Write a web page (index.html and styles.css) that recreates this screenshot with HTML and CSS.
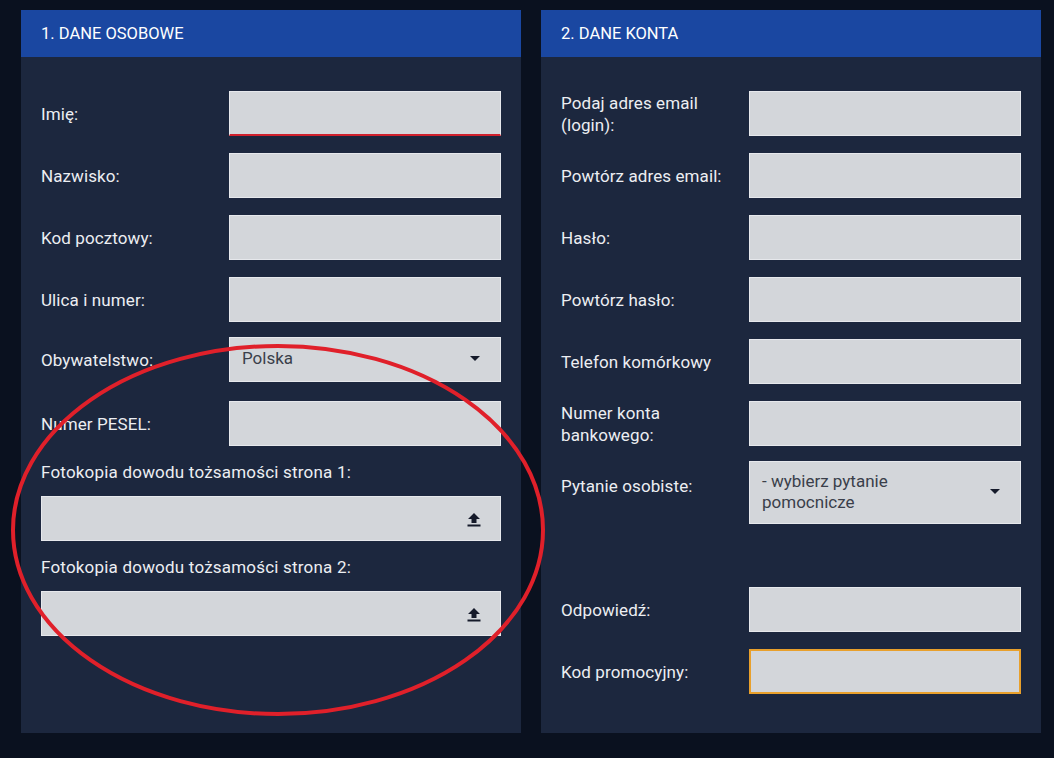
FILE: index.html
```html
<!DOCTYPE html>
<html lang="pl">
<head>
<meta charset="utf-8">
<title>Rejestracja</title>
<link rel="stylesheet" href="styles.css">
</head>
<body>
<div class="page">
  <section class="panel">
    <header class="panel-head">1. DANE OSOBOWE</header>
    <div class="panel-body">
      <div class="rows">
        <div class="row"><label class="lbl">Imię:</label><div class="field field-error"></div></div>
        <div class="row"><label class="lbl">Nazwisko:</label><div class="field"></div></div>
        <div class="row"><label class="lbl">Kod pocztowy:</label><div class="field"></div></div>
        <div class="row"><label class="lbl">Ulica i numer:</label><div class="field"></div></div>
        <div class="row row-up"><label class="lbl">Obywatelstwo:</label><div class="field select"><span class="sel-text">Polska</span><span class="caret"></span></div></div>
        <div class="row row-down"><label class="lbl">Numer PESEL:</label><div class="field"></div></div>
      </div>
      <div class="file-block">
        <label class="file-lbl">Fotokopia dowodu tożsamości strona 1:</label>
        <div class="field file">
          <svg class="upload" width="14" height="15" viewBox="0 0 14 15"><path d="M7 1 L13 7 L9.5 7 L9.5 11 L4.5 11 L4.5 7 L1 7 Z" fill="#151a2a"/><rect x="0.5" y="12.5" width="13" height="2" fill="#151a2a"/></svg>
        </div>
      </div>
      <div class="file-block">
        <label class="file-lbl">Fotokopia dowodu tożsamości strona 2:</label>
        <div class="field file">
          <svg class="upload" width="14" height="15" viewBox="0 0 14 15"><path d="M7 1 L13 7 L9.5 7 L9.5 11 L4.5 11 L4.5 7 L1 7 Z" fill="#151a2a"/><rect x="0.5" y="12.5" width="13" height="2" fill="#151a2a"/></svg>
        </div>
      </div>
    </div>
  </section>
  <section class="panel">
    <header class="panel-head">2. DANE KONTA</header>
    <div class="panel-body">
      <div class="rows">
        <div class="row"><label class="lbl">Podaj adres email (login):</label><div class="field"></div></div>
        <div class="row"><label class="lbl">Powtórz adres email:</label><div class="field"></div></div>
        <div class="row"><label class="lbl">Hasło:</label><div class="field"></div></div>
        <div class="row"><label class="lbl">Powtórz hasło:</label><div class="field"></div></div>
        <div class="row"><label class="lbl">Telefon komórkowy</label><div class="field"></div></div>
        <div class="row"><label class="lbl">Numer konta bankowego:</label><div class="field"></div></div>
        <div class="row row-tall"><label class="lbl lbl-top">Pytanie osobiste:</label><div class="field select select-tall"><span class="sel-text">- wybierz pytanie pomocnicze</span><span class="caret"></span></div></div>
        <div class="row row-gap"><label class="lbl">Odpowiedź:</label><div class="field"></div></div>
        <div class="row"><label class="lbl">Kod promocyjny:</label><div class="field field-focus"></div></div>
      </div>
    </div>
  </section>
  <svg class="annot" width="1054" height="758" viewBox="0 0 1054 758"><ellipse cx="278" cy="530" rx="265" ry="184" fill="none" stroke="#e0202a" stroke-width="4"/></svg>
</div>
</body>
</html>
```

FILE: styles.css
```css
html, body {
  margin: 0;
  padding: 0;
}
body {
  background: #0a111f;
  font-family: Roboto, "Liberation Sans", Arial, sans-serif;
  color: #eceef2;
  width: 1054px;
  height: 758px;
  overflow: hidden;
}
.page {
  position: relative;
  display: flex;
  gap: 20px;
  padding: 10px 0 0 21px;
}
.panel {
  width: 500px;
  height: 723px;
  background: #1c273e;
  display: flex;
  flex-direction: column;
}
.panel-head {
  height: 47px;
  background: #1a47a1;
  color: #ffffff;
  font-size: 16.5px;
  line-height: 47px;
  padding-left: 20px;
}
.panel-body {
  padding: 34px 20px 0 20px;
}
.rows {
  display: flex;
  flex-direction: column;
  gap: 17px;
}
.row {
  display: grid;
  grid-template-columns: 188px 272px;
  align-items: center;
}
.row-up {
  margin-top: -2px;
}
.row-down {
  margin-top: 2px;
}
.lbl {
  font-size: 17px;
  line-height: 22px;
  letter-spacing: 0.1px;
  padding-right: 16px;
}
.lbl-top {
  align-self: start;
  padding-top: 14px;
}
.field {
  height: 45px;
  box-sizing: border-box;
  background: #d3d6da;
  border: 1px solid #e6e8ec;
}
.field-error {
  border-bottom: 2px solid #d0202c;
}
.field-focus {
  border: 2px solid #e8a02c;
}
.select {
  display: flex;
  align-items: center;
  justify-content: space-between;
  padding: 0 20px 0 12px;
  color: #3a3f4a;
  font-size: 17px;
}
.select .sel-text {
  margin-top: -4px;
}
.select-tall {
  height: 63px;
  line-height: 21px;
}
.select-tall .sel-text {
  width: 200px;
  margin-top: -1px;
}
.caret {
  width: 0;
  height: 0;
  border-left: 5px solid transparent;
  border-right: 5px solid transparent;
  border-top: 5px solid #151a2a;
  margin-top: -2px;
}
.row-tall {
  align-items: start;
  margin-top: -2px;
}
.row-gap {
  margin-top: 46px;
}
.file-block {
  display: flex;
  flex-direction: column;
}
.file-lbl {
  font-size: 17px;
  line-height: 20px;
  letter-spacing: 0.2px;
  margin: 16px 0 14px;
}
.file {
  width: 460px;
  display: flex;
  align-items: center;
  justify-content: flex-end;
  padding-right: 19px;
}
.upload {
  display: block;
  margin-top: 1px;
}
.annot {
  position: absolute;
  left: 0;
  top: 0;
  pointer-events: none;
}
```
